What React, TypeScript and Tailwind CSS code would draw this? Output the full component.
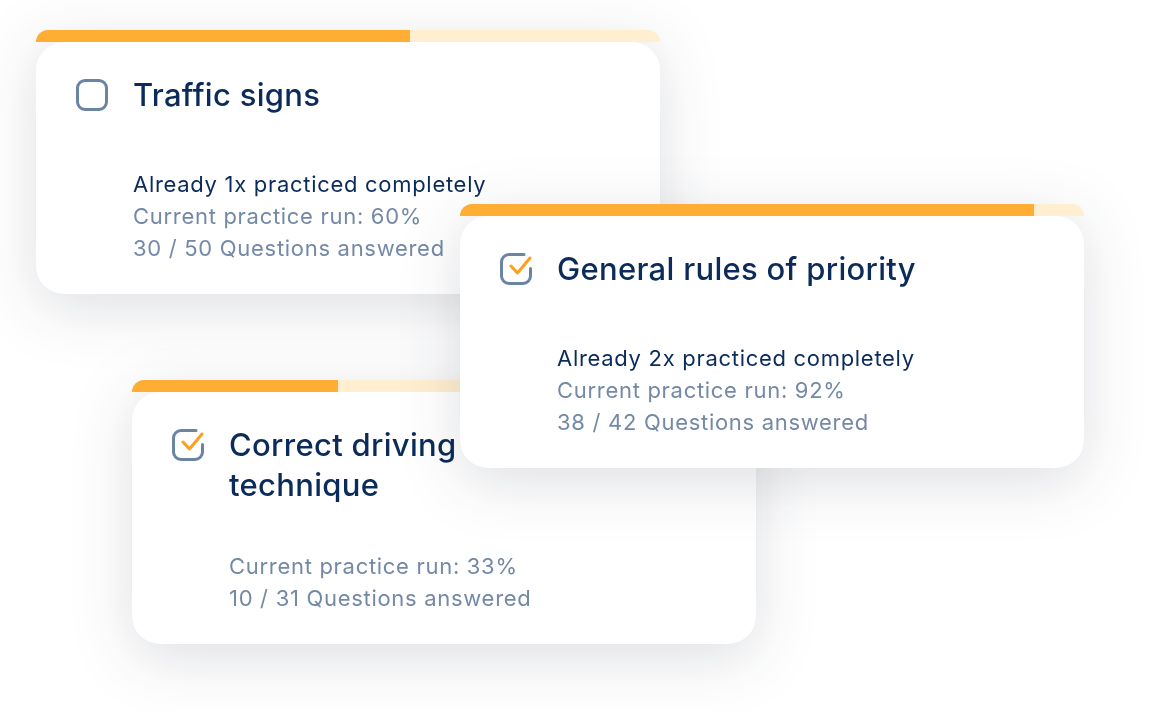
import React from "react";

interface TopicCardProps {
  title: string;
  checked: boolean;
  percent: number;
  completedRuns?: number;
  answered: number;
  total: number;
  className: string;
}

function CheckIcon({ checked }: { checked: boolean }) {
  if (!checked) {
    return (
      <svg width="32" height="32" viewBox="0 0 32 32" fill="none" className="shrink-0">
        <rect x="1.5" y="1.5" width="29" height="29" rx="7.5" stroke="#6a84a3" strokeWidth="3" />
      </svg>
    );
  }
  return (
    <svg width="32" height="32" viewBox="0 0 32 32" fill="none" className="shrink-0">
      <path
        d="M24 1.5H9A7.5 7.5 0 0 0 1.5 9V23A7.5 7.5 0 0 0 9 30.5H23A7.5 7.5 0 0 0 30.5 23V15.5"
        stroke="#6a84a3"
        strokeWidth="3"
        strokeLinecap="round"
      />
      <path
        d="M11 13L17.5 20L30 5"
        stroke="#ff9f1c"
        strokeWidth="3"
        strokeLinecap="round"
        strokeLinejoin="round"
      />
    </svg>
  );
}

function TopicCard({ title, checked, percent, completedRuns, answered, total, className }: TopicCardProps) {
  return (
    <div className={`absolute w-[624px] flex flex-col drop-shadow-[0_14px_30px_rgba(20,30,50,0.14)] ${className}`}>
      {/* progress bar sitting on top of the card */}
      <div className="h-[12px] rounded-t-[28px] bg-[#ffefd0] overflow-hidden">
        <div className="h-full bg-[#ffad33]" style={{ width: `${percent}%` }} />
      </div>
      <div className="h-[252px] bg-white rounded-[28px] pt-[33px] pb-[30px] pl-[40px] pr-[40px] flex flex-col justify-between">
        <div className="flex items-start gap-[25px]">
          <div className="pt-[4px]">
            <CheckIcon checked={checked} />
          </div>
          <div className="text-[31px] leading-[40px] font-medium tracking-[0.3px] text-[#0b2b5b] whitespace-pre-line">
            {title}
          </div>
        </div>
        <div className="pl-[57px] text-[22px] leading-[32px] tracking-[0.7px]">
          {completedRuns !== undefined && (
            <div className="text-[#0b2b5b]">Already {completedRuns}x practiced completely</div>
          )}
          <div className="text-[#7389a6]">Current practice run: {percent}%</div>
          <div className="text-[#7389a6]">
            {answered} / {total} Questions answered
          </div>
        </div>
      </div>
    </div>
  );
}

export default function App() {
  return (
    <div
      className="relative w-[1154px] h-[712px] bg-white overflow-hidden"
      style={{ fontFamily: "Inter, 'Noto Sans', sans-serif" }}
    >
      <TopicCard
        className="left-[36px] top-[30px]"
        title="Traffic signs"
        checked={false}
        percent={60}
        completedRuns={1}
        answered={30}
        total={50}
      />
      <TopicCard
        className="left-[132px] top-[380px]"
        title={"Correct driving\ntechnique"}
        checked={true}
        percent={33}
        answered={10}
        total={31}
      />
      <TopicCard
        className="left-[460px] top-[204px]"
        title="General rules of priority"
        checked={true}
        percent={92}
        completedRuns={2}
        answered={38}
        total={42}
      />
    </div>
  );
}
